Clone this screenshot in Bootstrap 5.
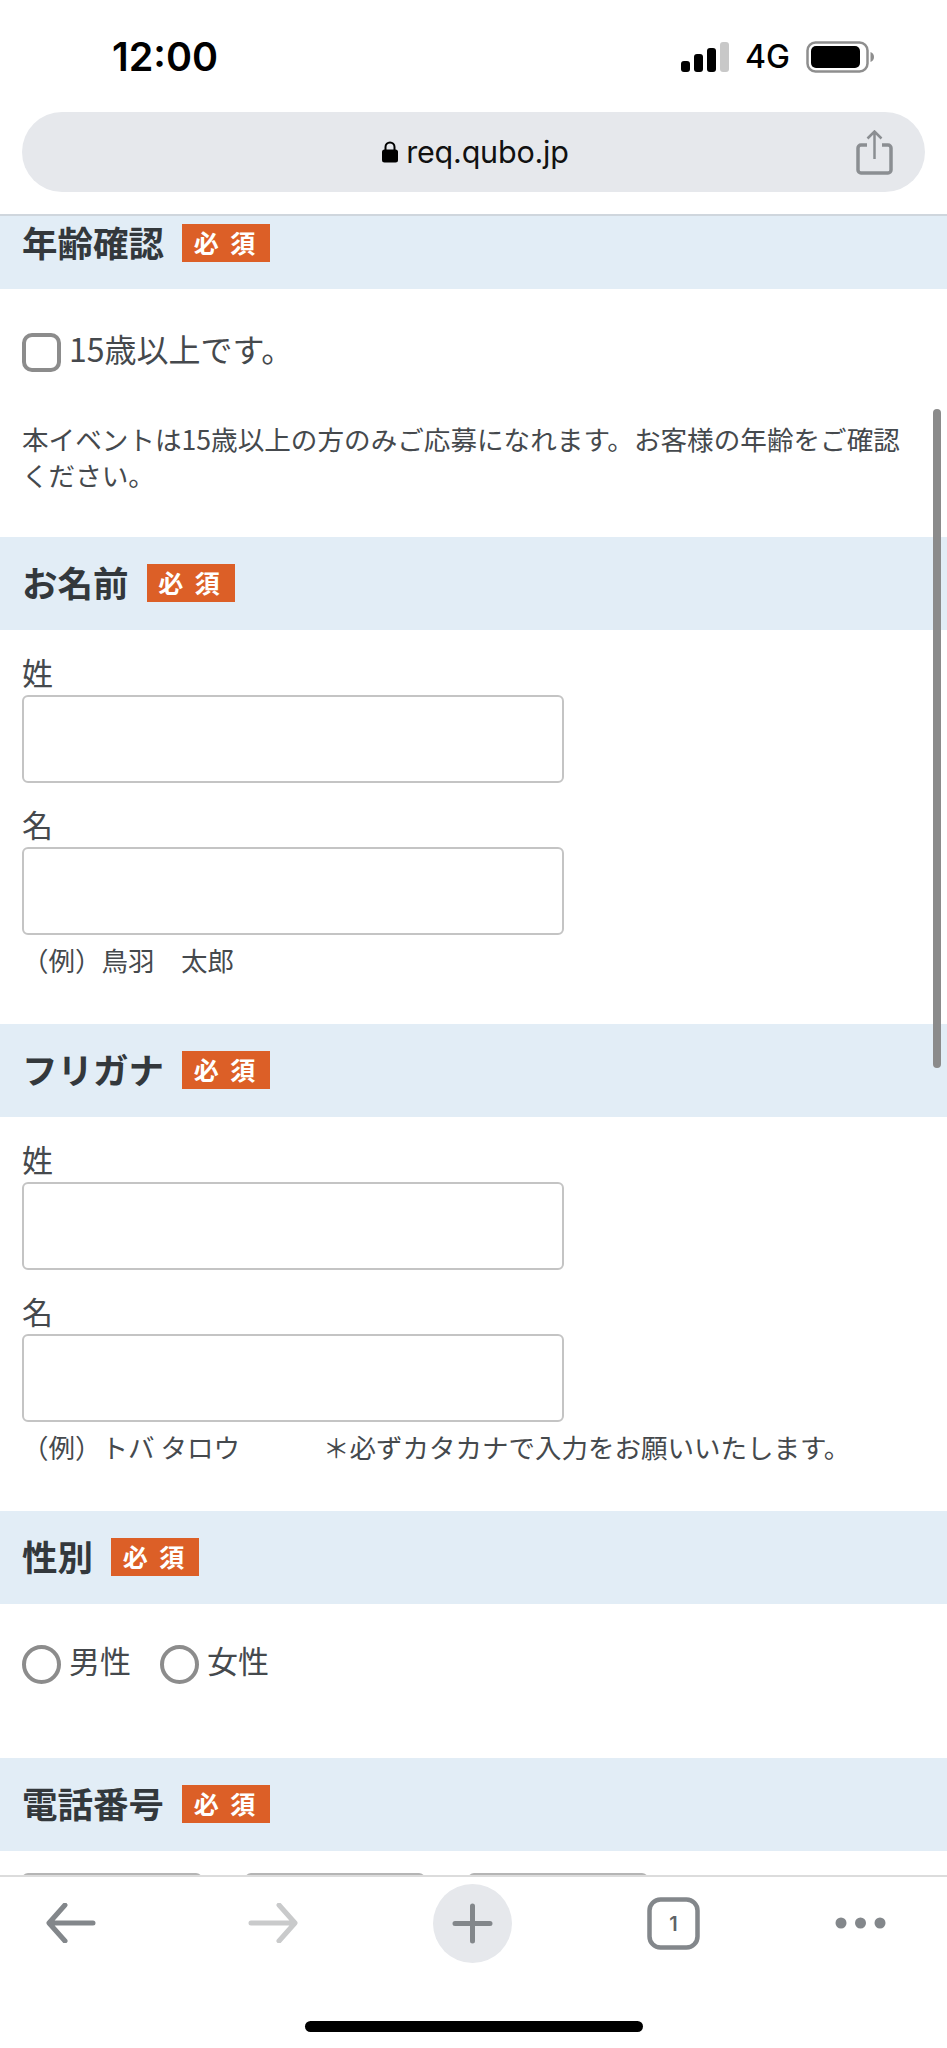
<!DOCTYPE html>
<html lang="ja">
<head>
  <meta charset="UTF-8" />
  <title>req.qubo.jp</title>
  <link href="https://cdn.jsdelivr.net/npm/bootstrap@5.3.3/dist/css/bootstrap.min.css" rel="stylesheet" />
  <style>
    html, body { margin: 0; background: #fff; }
    body { font-family: "Noto Sans CJK JP", "Liberation Sans", sans-serif; color: #45494d; overflow: hidden; }
    .app-shell { height: 2048px; width: 947px; }
    .browser-top { height: 216px; border-bottom: 2px solid #cfd6dd; flex: none; }
    .status-row { height: 112px; padding: 33px 73px 0 112px; font-family: Inter, "Liberation Sans", sans-serif; color: #000; }
    .status-time { font-size: 39.5px; font-weight: 600; line-height: 48px; }
    .status-right { margin-top: 4px; }
    .status-net { font-size: 32px; font-weight: 500; line-height: 40px; }
    .url-pill { height: 80px; margin: 0 22px; background: #e6e8ec; border-radius: 40px; padding-right: 32px; }
    .url-text { font-family: Inter, "Liberation Sans", sans-serif; font-size: 30.5px; color: #111; letter-spacing: -.2px; }
    .url-center { flex: 1; padding-left: 73px; }
    .page-area { flex: 1; overflow: hidden; position: relative; }
    .scroll-thumb { position: absolute; left: 933px; top: 193px; width: 8px; height: 659px; background: #8b8b8b; border-radius: 4px; }
    .form-head { height: 93px; padding-left: 22px; padding-bottom: 2px; background: #e2edf6; gap: 18px; }
    .form-head.head-cut { height: 73px; padding-bottom: 20px; }
    .form-title { font-size: 35.5px; font-weight: 700; line-height: 1; color: #33383c; margin: 0 0 1px; }
    .req-tag { width: 88px; height: 38px; background: #dc5f27; color: #fff; font-size: 25px; font-weight: 700; line-height: 37px; text-align: center; letter-spacing: 3px; }
    .form-body { padding: 0 22px; }
    .body-age { height: 248px; padding-top: 44px; }
    .body-name { height: 394px; padding-top: 22px; }
    .body-kana { height: 394px; padding-top: 22px; }
    .body-sex { height: 154px; padding-top: 41px; }
    .age-row { margin-bottom: 49px; }
    .check-box.form-check-input { width: 39px; height: 39px; margin: 0; border: 4px solid #8c8c8c; border-radius: 10px; background-color: #fff; flex: none; }
    .check-radio.form-check-input { width: 39px; height: 39px; margin: 0; border: 4px solid #8c8c8c; background-color: #fff; flex: none; }
    .big-label { font-size: 31px; line-height: 40px; margin: -5px 0 0; color: #45494d; }
    .age-label { font-size: 32px; }
    .radio-first { margin-right: 29px; }
    .note-text { font-size: 26.6px; line-height: 36px; margin: 0; color: #45494d; }
    .name-label { display: block; font-size: 31px; line-height: 40px; margin: 0 0 3px; color: #45494d; }
    .name-input.form-control { width: 542px; height: 88px; border: 2px solid #c4c4c4; border-radius: 6px; margin-bottom: 21px; }
    .name-input.last-input { margin-bottom: 5px; }
    .hint-row { font-size: 26.5px; line-height: 40px; color: #45494d; white-space: nowrap; }
    .hint-gap { margin-left: 83px; }
    .tel-input.form-control { width: 180px; height: 87px; border: 2px solid #b5b5b5; border-radius: 6px; }
    .tel-row { padding: 22px 22px 0; gap: 43px; }
    .browser-bottom { height: 173px; flex: none; border-top: 2px solid #dcdcdc; background: #fff; position: relative; }
    .tool-row { height: 92px; padding-left: 46px; gap: 135px; }
    .tool-forward { margin-left: 17px; }
    .plus-circle { width: 79px; height: 79px; border-radius: 50%; background: #e6e8ec; }
    .home-bar { width: 338px; height: 11px; background: #000; border-radius: 6px; margin: 52px auto 0; }
  </style>
</head>
<body>
  <div class="app-shell d-flex flex-column">
    <div class="browser-top">
      <div class="status-row d-flex justify-content-between align-items-start">
        <div class="status-time">12:00</div>
        <div class="status-right d-flex align-items-center gap-3">
          <svg width="48" height="32" viewBox="0 0 48 32"><rect x="0" y="20" width="9" height="11" rx="3" fill="#000"/><rect x="13" y="13" width="9" height="18" rx="3" fill="#000"/><rect x="26" y="7" width="9" height="24" rx="3" fill="#000"/><rect x="39" y="1" width="9" height="30" rx="3" fill="#c8c8c8"/></svg>
          <span class="status-net">4G</span>
          <svg width="68" height="32" viewBox="0 0 68 32"><rect x="1.500" y="1.500" width="60" height="29" rx="8" fill="none" stroke="#8e8e8e" stroke-width="2.500"/><rect x="5" y="5" width="49" height="22" rx="5" fill="#000"/><path d="M64.500 11c2 .8 3.500 2.500 3.500 5s-1.500 4.200-3.500 5z" fill="#8e8e8e"/></svg>
        </div>
      </div>
      <div class="url-pill d-flex align-items-center">
        <div class="url-center d-flex justify-content-center align-items-center gap-2">
          <svg width="16" height="22" viewBox="0 0 16 22"><path d="M3.500 9V6a4.500 4.500 0 0 1 9 0v3" fill="none" stroke="#000" stroke-width="2"/><rect x="0" y="8.500" width="16" height="13" rx="2.500" fill="#000"/></svg>
          <span class="url-text">req.qubo.jp</span>
        </div>
        <svg width="37" height="45" viewBox="0 0 37 45"><path d="M11 15H5a3 3 0 0 0-3 3v22a3 3 0 0 0 3 3h27a3 3 0 0 0 3-3V18a3 3 0 0 0-3-3h-6" fill="none" stroke="#8b8e92" stroke-width="3.500"/><path d="M18.500 29V2M11.500 8.500l7-7 7 7" fill="none" stroke="#8b8e92" stroke-width="2.500"/></svg>
      </div>
    </div>

    <div class="page-area">
      <div class="form-head head-cut d-flex align-items-center">
        <h2 class="form-title">年齢確認</h2><span class="req-tag">必 須</span>
      </div>
      <div class="form-body body-age">
        <div class="age-row d-flex align-items-start gap-2">
          <input class="form-check-input check-box" type="checkbox" id="ageOk" />
          <label class="big-label age-label" for="ageOk">15歳以上です。</label>
        </div>
        <p class="note-text">本イベントは15歳以上の方のみご応募になれます。お客様の年齢をご確認ください。</p>
      </div>

      <div class="form-head d-flex align-items-center">
        <h2 class="form-title">お名前</h2><span class="req-tag">必 須</span>
      </div>
      <div class="form-body body-name">
        <label class="name-label">姓</label>
        <input class="form-control name-input" type="text" />
        <label class="name-label">名</label>
        <input class="form-control name-input last-input" type="text" />
        <div class="hint-row">（例）鳥羽　太郎</div>
      </div>

      <div class="form-head d-flex align-items-center">
        <h2 class="form-title">フリガナ</h2><span class="req-tag">必 須</span>
      </div>
      <div class="form-body body-kana">
        <label class="name-label">姓</label>
        <input class="form-control name-input" type="text" />
        <label class="name-label">名</label>
        <input class="form-control name-input last-input" type="text" />
        <div class="hint-row">（例）トバ タロウ<span class="hint-gap">＊必ずカタカナで入力をお願いいたします。</span></div>
      </div>

      <div class="form-head d-flex align-items-center">
        <h2 class="form-title">性別</h2><span class="req-tag">必 須</span>
      </div>
      <div class="form-body body-sex d-flex align-items-start">
        <div class="radio-first d-flex align-items-start gap-2">
          <input class="form-check-input check-radio" type="radio" name="sex" id="sexM" />
          <label class="big-label" for="sexM">男性</label>
        </div>
        <div class="d-flex align-items-start gap-2">
          <input class="form-check-input check-radio" type="radio" name="sex" id="sexF" />
          <label class="big-label" for="sexF">女性</label>
        </div>
      </div>

      <div class="form-head d-flex align-items-center">
        <h2 class="form-title">電話番号</h2><span class="req-tag">必 須</span>
      </div>
      <div class="tel-row d-flex">
        <input class="form-control tel-input" type="tel" />
        <input class="form-control tel-input" type="tel" />
        <input class="form-control tel-input" type="tel" />
      </div>

      <div class="scroll-thumb"></div>
    </div>

    <div class="browser-bottom">
      <div class="tool-row d-flex align-items-center">
        <svg width="50" height="40" viewBox="0 0 50 40"><path d="M47 20H4M19 2 3 20l16 18" fill="none" stroke="#83878b" stroke-width="5" stroke-linecap="round" stroke-linejoin="round"/></svg>
        <svg class="tool-forward" width="50" height="40" viewBox="0 0 50 40"><path d="M3 20h43M31 2l16 18-16 18" fill="none" stroke="#c9cacb" stroke-width="5" stroke-linecap="round" stroke-linejoin="round"/></svg>
        <div class="plus-circle d-flex align-items-center justify-content-center">
          <svg width="41" height="41" viewBox="0 0 41 41"><path d="M20.500 3v35M3 20.500h35" fill="none" stroke="#83878b" stroke-width="5" stroke-linecap="round"/></svg>
        </div>
        <svg width="53" height="53" viewBox="0 0 53 53"><rect x="2.500" y="2.500" width="48" height="48" rx="11" fill="none" stroke="#83878b" stroke-width="4.500"/><text x="26.500" y="34" text-anchor="middle" font-family="Inter, sans-serif" font-size="20" font-weight="600" fill="#5f6367">1</text></svg>
        <svg width="51" height="12" viewBox="0 0 51 12"><circle cx="6" cy="6" r="5.500" fill="#83878b"/><circle cx="25.500" cy="6" r="5.500" fill="#83878b"/><circle cx="45" cy="6" r="5.500" fill="#83878b"/></svg>
      </div>
      <div class="home-bar"></div>
    </div>
  </div>
  <script src="https://cdn.jsdelivr.net/npm/bootstrap@5.3.3/dist/js/bootstrap.bundle.min.js"></script>
</body>
</html>
